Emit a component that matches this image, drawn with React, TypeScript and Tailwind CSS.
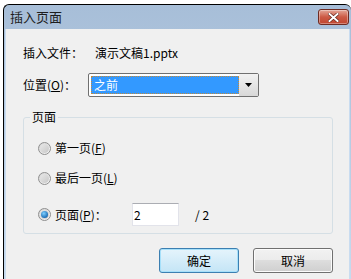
import React from "react"

function Radio({ checked }: { checked?: boolean }) {
  return (
    <span className="relative flex h-[13px] w-[13px] shrink-0 items-center justify-center rounded-full border border-[#8f8f8f] bg-gradient-to-br from-[#d4d4d4] to-[#f7f7f7]">
      <span className="h-[9px] w-[9px] rounded-full bg-gradient-to-br from-[#e8e8e8] to-[#c8c8c8]" />
      {checked && (
        <span className="absolute h-[7px] w-[7px] rounded-full bg-[radial-gradient(circle_at_40%_35%,#7fd0ff,#1d6fb8_70%,#0f4a86)]" />
      )}
    </span>
  )
}

export default function App() {
  return (
    <div
      className="h-[279px] w-[351px] overflow-hidden bg-white pl-[3px] pt-[4px] text-[12px] text-black"
      style={{ fontFamily: '"Noto Sans CJK SC", "Noto Sans", sans-serif' }}
    >
      <div className="flex h-[280px] w-[348px] flex-col rounded-t-[6px] border border-b-0 border-r-0 border-black bg-gradient-to-b from-[#a7bed8] to-[#c7dbef]">
        {/* title bar */}
        <div className="flex h-[24px] shrink-0 items-start justify-between pl-[6px] pr-[2px]">
          <span className="mt-[4px] text-[13px] leading-[16px] text-[#1e1e1e]">插入页面</span>
          <div className="mt-[4px] flex h-[16px] w-[31px] items-center justify-center rounded-[3px] border border-[#6e2b22] bg-gradient-to-b from-[#e3a698] via-[#cc5a45] to-[#c0452f] shadow-[inset_0_0_0_1px_rgba(255,255,255,0.35)]">
            <svg width="11" height="9" viewBox="0 0 11 9">
              <path d="M1.5 1 L9.5 8 M9.5 1 L1.5 8" stroke="#5a1d14" strokeWidth="3.2" strokeLinecap="square" />
              <path d="M1.5 1 L9.5 8 M9.5 1 L1.5 8" stroke="#ffffff" strokeWidth="2" strokeLinecap="square" />
            </svg>
          </div>
        </div>

        {/* client */}
        <div className="ml-[1px] mr-[1px] flex flex-1 flex-col border-x border-x-[#c9dcf0] bg-[#f0f0f0] pl-[17px]">
          <div className="mt-[16px] flex h-[16px] items-center leading-[16px]">
            <span className="w-[72px]">插入文件：</span>
            <span>演示文稿1.pptx</span>
          </div>

          <div className="mt-[12px] flex h-[24px] items-center">
            <span className="w-[65px]">位置(<span className="underline">O</span>)：</span>
            <div className="flex h-[24px] w-[171px] items-stretch rounded-[2px] border border-[#707070] bg-white p-[2px] pr-0">
              <div className="flex flex-1 items-center bg-[#3399ff] pl-[3px] text-white outline-1 outline-dotted outline-[#c48a3a] -outline-offset-1">
                之前
              </div>
              <div className="-my-[2px] flex w-[19px] items-center justify-center bg-gradient-to-b from-[#f2f2f2] to-[#d8d8d8]">
                <svg width="7" height="4" viewBox="0 0 7 4">
                  <path d="M0 0 H7 L3.5 4 Z" fill="#000" />
                </svg>
              </div>
            </div>
          </div>

          {/* group box */}
          <div className="relative mt-[20px] flex h-[117px] w-[310px] flex-col rounded-[3px] border border-[#d5dfe5] pl-[14px]">
            <span className="absolute -top-[9px] left-[6px] bg-[#f0f0f0] px-[2px] leading-[16px]">页面</span>
            <div className="mt-[23px] flex h-[14px] items-center gap-[4px]">
              <Radio />
              <span>第一页(<span className="underline">F</span>)</span>
            </div>
            <div className="mt-[16px] flex h-[14px] items-center gap-[4px]">
              <Radio />
              <span>最后一页(<span className="underline">L</span>)</span>
            </div>
            <div className="mt-[18px] flex h-[23px] items-center">
              <Radio checked />
              <span className="ml-[4px] w-[77px]">页面(<span className="underline">P</span>)：</span>
              <div className="flex h-[23px] w-[47px] items-center border border-[#e2e3ea] border-t-[#abadb3] bg-white pl-[1px]">
                2
              </div>
              <span className="ml-[16px]">/ 2</span>
            </div>
          </div>

          <div className="mt-[14px] flex gap-[14px] pl-[136px]">
            <button className="flex h-[25px] w-[80px] items-center justify-center rounded-[3px] border border-[#3c7fb1] bg-gradient-to-b from-[#e5f4fc] to-[#c4e5f6] shadow-[inset_0_0_0_1px_#a6e0fa]">
              确定
            </button>
            <button className="flex h-[25px] w-[80px] items-center justify-center rounded-[3px] border border-[#707070] bg-[linear-gradient(#f2f2f2,#ebebeb_50%,#dddddd_50%,#cfcfcf)] shadow-[inset_0_0_0_1px_#fcfcfc]">
              取消
            </button>
          </div>
        </div>
      </div>
    </div>
  )
}
